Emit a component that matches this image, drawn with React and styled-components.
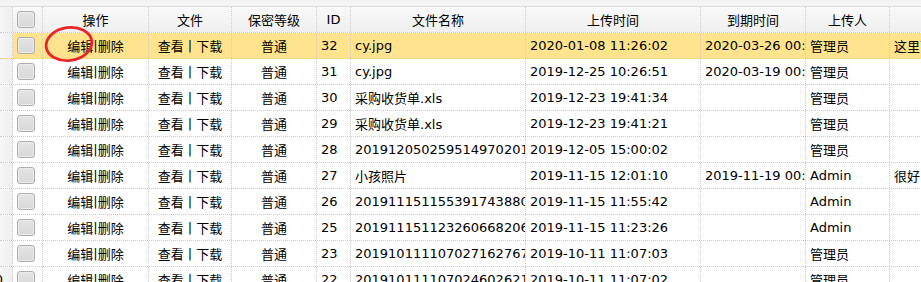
import React from 'react';
import styled, { createGlobalStyle } from 'styled-components';

const Global = createGlobalStyle`
    html, body {
        margin: 0;
        padding: 0;
        background: #fff;
        overflow: hidden;
    }
`;

// 列宽（含右侧虚线）
const COLS = '13px 30px 106px 83px 85px 34px 175px 175px 105px 84px 140px';

const Page = styled.div`
    position: relative;
    width: 921px;
    height: 282px;
    overflow: hidden;
    font-family: "DejaVu Sans", "Noto Sans CJK SC", sans-serif;
    font-size: 13px;
    color: #000;
`;

const TopStrip = styled.div`
    height: 6px;
    background: #f4f4f4;
    border-bottom: 1px solid #dcdcdc;
`;

const Grid = styled.div`
    width: 1030px;
`;

const HeaderRow = styled.div`
    display: grid;
    grid-template-columns: ${COLS};
    height: 26px;
    background: linear-gradient(to bottom, #f9f9f9 0, #efefef 100%);
    border-bottom: 1px dotted #ccc;
    box-sizing: border-box;
`;

const Row = styled.div`
    display: grid;
    grid-template-columns: ${COLS};
    height: 26px;
    box-sizing: border-box;
    border-bottom: 1px dotted #ccc;
    background: ${p => (p.$selected ? '#ffe48d' : '#fff')};
`;

const Cell = styled.div`
    display: flex;
    align-items: center;
    justify-content: ${p => (p.$align === 'center' ? 'center' : 'flex-start')};
    padding: 0 4px;
    box-sizing: border-box;
    border-right: 1px dotted #ccc;
    white-space: nowrap;
    overflow: hidden;
    min-width: 0;
`;

const HeadCell = styled(Cell)`
    justify-content: center;
`;

const NumCell = styled.div`
    display: flex;
    align-items: center;
    justify-content: flex-end;
    padding-right: 9px;
    box-sizing: border-box;
    border-right: 1px dotted #ccc;
    background: linear-gradient(to right, #f6f6f6 0, #efefef 100%);
    overflow: hidden;
    white-space: nowrap;
`;

const CheckCell = styled.div`
    display: flex;
    align-items: center;
    padding-left: 4px;
    box-sizing: border-box;
    border-right: 1px dotted #ccc;
`;

const CheckBox = styled.span`
    display: block;
    width: 18px;
    height: 17px;
    box-sizing: border-box;
    border: 1px solid #adadad;
    border-radius: 3px;
    background: linear-gradient(to bottom, #e4e4e4 0, #d8d8d8 100%);
    box-shadow: inset 0 0 0 1px #ececec;
`;

const Zh = styled.span`
    font-size: 13px;
`;

const Sep = styled.span`
    padding: ${p => (p.$wide ? '0 4px' : '0')};
`;

const Ring = styled.svg`
    position: absolute;
    left: 40px;
    top: 22px;
    pointer-events: none;
`;

const rows = [
    { n: 1, id: 32, name: 'cy.jpg', up: '2020-01-08 11:26:02', exp: '2020-03-26 00:00:00', who: '管理员', note: '这里可以填写备注', sel: true },
    { n: 2, id: 31, name: 'cy.jpg', up: '2019-12-25 10:26:51', exp: '2020-03-19 00:00:00', who: '管理员' },
    { n: 3, id: 30, name: '采购收货单.xls', up: '2019-12-23 19:41:34', who: '管理员' },
    { n: 4, id: 29, name: '采购收货单.xls', up: '2019-12-23 19:41:21', who: '管理员' },
    { n: 5, id: 28, name: '20191205025951497020125.jpg', up: '2019-12-05 15:00:02', who: '管理员' },
    { n: 6, id: 27, name: '小孩照片', up: '2019-11-15 12:01:10', exp: '2019-11-19 00:00:00', who: 'Admin', note: '很好' },
    { n: 7, id: 26, name: '20191115115539174388023.jpg', up: '2019-11-15 11:55:42', who: 'Admin' },
    { n: 8, id: 25, name: '20191115112326066820611.jpg', up: '2019-11-15 11:23:26', who: 'Admin' },
    { n: 9, id: 23, name: '20191011110702716276745.jpg', up: '2019-10-11 11:07:03', who: '管理员' },
    { n: 10, id: 22, name: '20191011110702460262198.jpg', up: '2019-10-11 11:07:02', who: '管理员' },
];

const heads = ['操作', '文件', '保密等级', 'ID', '文件名称', '上传时间', '到期时间', '上传人', ''];

export default class App extends React.Component {
    render() {
        return (
            <Page>
                <Global />
                <TopStrip />
                <Grid>
                    <HeaderRow>
                        <NumCell />
                        <CheckCell><CheckBox /></CheckCell>
                        {heads.map((h, i) => (
                            <HeadCell key={i}><Zh>{h}</Zh></HeadCell>
                        ))}
                    </HeaderRow>
                    {rows.map(r => (
                        <Row key={r.id} $selected={r.sel}>
                            {/* 行号列被截掉了，只露出两位数的尾巴 */}
                            <NumCell>{r.n >= 10 ? r.n : ''}</NumCell>
                            <CheckCell><CheckBox /></CheckCell>
                            <Cell $align="center">
                                <Zh>编辑</Zh><Sep>|</Sep><Zh>删除</Zh>
                            </Cell>
                            <Cell $align="center">
                                <Zh>查看</Zh><Sep $wide>|</Sep><Zh>下载</Zh>
                            </Cell>
                            <Cell $align="center"><Zh>普通</Zh></Cell>
                            <Cell>{r.id}</Cell>
                            <Cell>{r.name}</Cell>
                            <Cell>{r.up}</Cell>
                            <Cell>{r.exp || ''}</Cell>
                            <Cell>{r.who}</Cell>
                            <Cell>{r.note || ''}</Cell>
                        </Row>
                    ))}
                </Grid>
                <Ring width="60" height="46" viewBox="0 0 60 46">
                    <ellipse cx="29" cy="22" rx="23" ry="16.5" fill="none" stroke="#e8262a" strokeWidth="2.8"
                             transform="rotate(-8 29 22)" />
                </Ring>
            </Page>
        );
    }
}
